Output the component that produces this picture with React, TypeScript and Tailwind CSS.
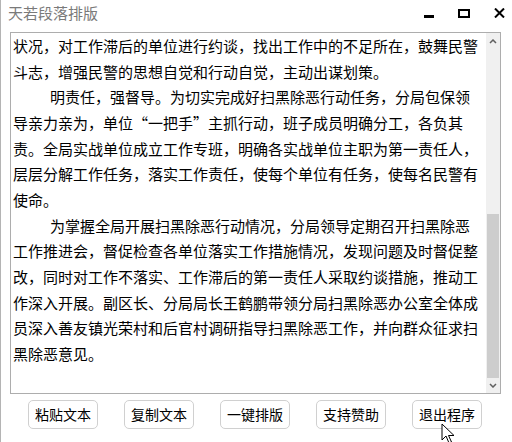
import React from 'react';

const LINES = [
  { text: '状况，对工作滞后的单位进行约谈，找出工作中的不足所在，鼓舞民警' },
  { text: '斗志，增强民警的思想自觉和行动自觉，主动出谋划策。' },
  { text: '明责任，强督导。为切实完成好扫黑除恶行动任务，分局包保领', indent: true },
  { text: '导亲力亲为，单位“一把手”主抓行动，班子成员明确分工，各负其' },
  { text: '责。全局实战单位成立工作专班，明确各实战单位主职为第一责任人，' },
  { text: '层层分解工作任务，落实工作责任，使每个单位有任务，使每名民警有' },
  { text: '使命。' },
  { text: '为掌握全局开展扫黑除恶行动情况，分局领导定期召开扫黑除恶', indent: true },
  { text: '工作推进会，督促检查各单位落实工作措施情况，发现问题及时督促整' },
  { text: '改，同时对工作不落实、工作滞后的第一责任人采取约谈措施，推动工' },
  { text: '作深入开展。副区长、分局局长王鹤鹏带领分局扫黑除恶办公室全体成' },
  { text: '员深入善友镇光荣村和后官村调研指导扫黑除恶工作，并向群众征求扫' },
  { text: '黑除恶意见。' },
];

const BUTTONS = ['粘贴文本', '复制文本', '一键排版', '支持赞助', '退出程序'];

const font = { fontFamily: '"Noto Sans CJK SC", "Noto Sans", sans-serif' };

const App = () => {
  return (
    <div
      className="relative h-[442px] w-[512px] overflow-hidden border-l border-[#b4b4b4] bg-white"
      style={font}
    >
      {/* title bar */}
      <div className="flex h-[32px] items-center justify-between">
        <span className="pl-[7px] pb-[6px] text-[15px] text-[#7a7a7a]">天若段落排版</span>
        <div className="flex items-center gap-[24px] pr-[7px] pb-[6px]">
          <div className="mt-[7px] h-[3px] w-[10px] bg-black" />
          <div className="h-[9px] w-[12px] border-2 border-black" />
          <svg width="11" height="10" viewBox="0 0 11 10">
            <path d="M1 0.5L10 9.5M10 0.5L1 9.5" stroke="black" strokeWidth="2" />
          </svg>
        </div>
      </div>

      {/* text box */}
      <div className="ml-[9px] flex h-[362px] w-[491px] border border-[#adadad]">
        <div className="flex-1 pl-[2px] text-[15px] leading-[25.67px] text-black">
          {LINES.map((line, i) => (
            <div
              key={i}
              className={`whitespace-nowrap ${line.indent ? 'pl-[37px]' : ''}`}
            >
              {line.text}
            </div>
          ))}
        </div>
        <div className="flex w-[14px] flex-col bg-[#f0f0f0]">
          <div className="flex h-[17px] items-center justify-center">
            <svg width="8" height="5" viewBox="0 0 8 5">
              <path d="M1 4L4 1L7 4" stroke="#606060" strokeWidth="1.5" fill="none" />
            </svg>
          </div>
          <div className="h-[164px]" />
          <div className="mx-[1px] h-[164px] bg-[#cdcdcd]" />
          <div className="flex flex-1 items-center justify-center">
            <svg width="8" height="5" viewBox="0 0 8 5">
              <path d="M1 1L4 4L7 1" stroke="#606060" strokeWidth="1.5" fill="none" />
            </svg>
          </div>
        </div>
      </div>

      {/* buttons */}
      <div className="mt-[6px] flex gap-[26px] pl-[27px]">
        {BUTTONS.map((b) => (
          <button
            key={b}
            className="h-[29px] w-[70px] rounded-[5px] border border-[#d0d0d0] bg-white text-[14px] text-black"
          >
            {b}
          </button>
        ))}
      </div>

      {/* mouse cursor */}
      <svg
        className="absolute left-[440px] top-[423px]"
        width="14"
        height="21"
        viewBox="0 0 14 21"
      >
        <path
          d="M1 1L1 17L5 13L8 20L10.5 19L7.5 12.5L13 12.5Z"
          fill="white"
          stroke="black"
          strokeWidth="1"
        />
      </svg>
    </div>
  );
};

export default App;
